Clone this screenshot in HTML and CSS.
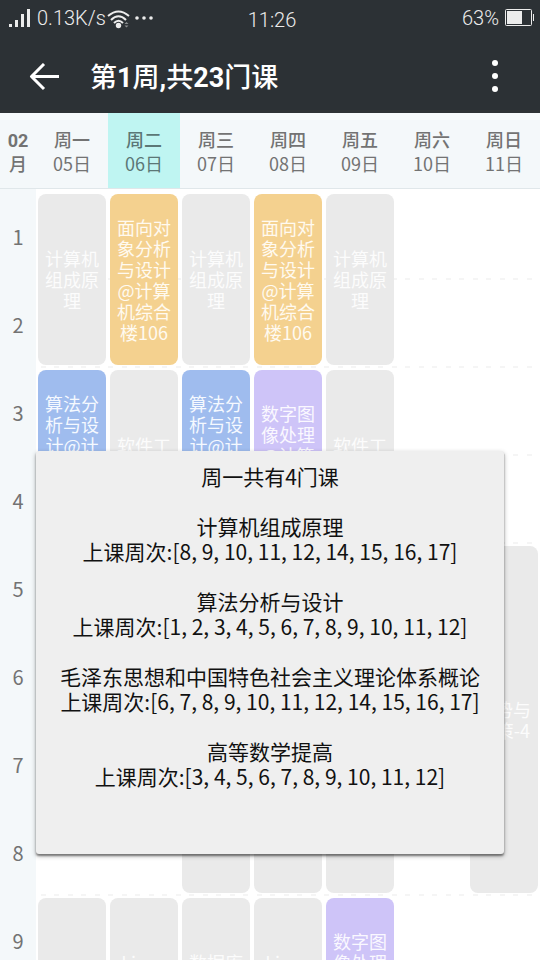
FILE: index.html
```html
<!DOCTYPE html>
<html lang="zh-CN">
<head>
<meta charset="utf-8">
<meta name="viewport" content="width=device-width, initial-scale=1">
<title>课程表</title>
<link rel="stylesheet" href="styles.css">
</head>
<body>
<div class="status">
  <div class="status-left">
    <svg width="22" height="20" viewBox="0 0 22 20" fill="#ececec"><rect x="0" y="16" width="3" height="3"/><rect x="6" y="12" width="3" height="7"/><rect x="12" y="6" width="3" height="13"/><rect x="18" y="1" width="3" height="18"/></svg>
    <span class="speed">0.13K/s</span>
    <svg class="wifi" width="24" height="20" viewBox="0 0 24 20" fill="none" stroke="#ececec" stroke-width="2"><path d="M1 7Q11.500-2 22 7M4 11Q11.500 3.500 19 11M7 14Q11.500 9.500 16 14"/><circle cx="11.500" cy="16.500" r="2.700" fill="#ececec" stroke="none"/><path d="M17.500 15h4l-2-2zM17.500 16.500h4l-2 2z" fill="#8b8e90" stroke="none"/></svg>
    <svg class="dots" width="20" height="20" viewBox="0 0 20 20" fill="#ececec"><circle cx="4" cy="10" r="1.800"/><circle cx="11" cy="10" r="1.800"/><circle cx="18" cy="10" r="1.800"/></svg>
  </div>
  <time class="clock">11:26</time>
  <div class="status-right">
    <span class="percent">63%</span>
    <svg width="30" height="18" viewBox="0 0 30 18"><rect x="0.500" y="0.500" width="26" height="16" rx="1" fill="none" stroke="#ececec"/><rect x="2" y="2" width="15" height="13" fill="#ececec"/><path d="M28.500 5v7" stroke="#ececec"/></svg>
  </div>
</div>
<header class="bar">
  <button class="icon-button" type="button" aria-label="返回"><svg width="32" height="28" viewBox="0 0 32 28" fill="none" stroke="#fff" stroke-width="3" stroke-linejoin="round"><path d="M15 1L2.500 13.500 15 26M3 13.500h27"/></svg></button>
  <h1>第<b>1</b>周<b>,</b>共<b>23</b>门课</h1>
  <button class="icon-button" type="button" aria-label="更多"><svg width="8" height="34" viewBox="0 0 8 34" fill="#fff"><circle cx="4" cy="3" r="3"/><circle cx="4" cy="16" r="3"/><circle cx="4" cy="29" r="3"/></svg></button>
</header>
<div class="days">
  <div class="month"><b>02</b><span>月</span></div>
  <div class="day"><strong>周一</strong><span>05日</span></div>
  <div class="day today"><strong>周二</strong><span>06日</span></div>
  <div class="day"><strong>周三</strong><span>07日</span></div>
  <div class="day"><strong>周四</strong><span>08日</span></div>
  <div class="day"><strong>周五</strong><span>09日</span></div>
  <div class="day"><strong>周六</strong><span>10日</span></div>
  <div class="day"><strong>周日</strong><span>11日</span></div>
</div>
<main class="schedule">
  <div class="period r1">1</div><div class="period r2">2</div><div class="period r3">3</div><div class="period r4">4</div><div class="period r5">5</div><div class="period r6">6</div><div class="period r7">7</div><div class="period r8">8</div><div class="period r9">9</div>
  <div class="rule r1"></div><div class="rule r2"></div><div class="rule r3"></div><div class="rule r4"></div><div class="rule r5"></div><div class="rule r6"></div><div class="rule r7"></div><div class="rule r8"></div>

  <div class="course mon p1">计算机<br>组成原<br>理</div>
  <div class="course tue p1 amber">面向对<br>象分析<br>与设计<br>@计算<br>机综合<br>楼106</div>
  <div class="course wed p1">计算机<br>组成原<br>理</div>
  <div class="course thu p1 amber">面向对<br>象分析<br>与设计<br>@计算<br>机综合<br>楼106</div>
  <div class="course fri p1">计算机<br>组成原<br>理</div>

  <div class="course mon p3 blue">算法分<br>析与设<br>计@计<br>算机综<br>合楼<br>106</div>
  <div class="course tue p3">软件工<br>程</div>
  <div class="course wed p3 blue">算法分<br>析与设<br>计@计<br>算机综<br>合楼<br>106</div>
  <div class="course thu p3 violet">数字图<br>像处理<br>@计算<br>机综合<br>楼106</div>
  <div class="course fri p3">软件工<br>程</div>

  <div class="course wed p7"></div>
  <div class="course thu p7"></div>
  <div class="course fri p7"></div>
  <div class="course sun p5">形势与<br>政策-4</div>

  <div class="course mon p9"></div>
  <div class="course tue p9">Linux<br>操作系<br>统</div>
  <div class="course wed p9">数据库<br>系统原<br>理</div>
  <div class="course thu p9">Linux<br>操作系<br>统</div>
  <div class="course fri p9 violet">数字图<br>像处理<br>@计算<br>机综合<br>楼106</div>
</main>
<section class="toast" role="status">
  <p>周一共有4门课</p>
  <p>计算机组成原理<br>上课周次:[8, 9, 10, 11, 12, 14, 15, 16, 17]</p>
  <p>算法分析与设计<br>上课周次:[1, 2, 3, 4, 5, 6, 7, 8, 9, 10, 11, 12]</p>
  <p>毛泽东思想和中国特色社会主义理论体系概论<br>上课周次:[6, 7, 8, 9, 10, 11, 12, 14, 15, 16, 17]</p>
  <p>高等数学提高<br>上课周次:[3, 4, 5, 6, 7, 8, 9, 10, 11, 12]</p>
</section>
</body>
</html>
```
FILE: styles.css
```css
* { box-sizing: border-box; }

body {
  display: flex;
  flex-direction: column;
  margin: 0;
  height: 100vh;
  overflow: hidden;
  position: relative;
  background: #fff;
  color: #737373;
  font-family: "Noto Sans CJK SC", sans-serif;
}

.status {
  display: grid;
  flex: none;
  grid-template-columns: 1fr auto 1fr;
  align-items: center;
  height: 40px;
  padding: 0 5px 4px 9px;
  background: #2c3135;
  color: #ececec;
  font-family: Roboto, sans-serif;
  font-size: 20px;
  font-weight: 300;
  line-height: 24px;
}
.status-left, .status-right { display: flex; align-items: center; }
.status-left { gap: 6px; }
.status-left .wifi { margin: 2px -4px 0 -5px; }
.status-right { justify-content: flex-end; gap: 6px; }
.clock { padding-top: 4px; }

.bar {
  display: flex;
  flex: none;
  align-items: center;
  height: 73px;
  padding: 0 21px;
  background: #2c3135;
  color: #fff;
}
.bar h1 {
  flex: 1;
  margin: 0 0 0 21px;
  font-size: 27px;
  font-weight: 500;
  line-height: 40px;
}
.bar b, .month b { font-family: Roboto, sans-serif; font-weight: 700; }
.icon-button {
  display: flex;
  align-items: center;
  justify-content: center;
  width: 48px;
  height: 48px;
  padding: 0;
  border: 0;
  background: none;
}

.days, .schedule {
  display: grid;
  grid-template-columns: 36px repeat(7, 1fr);
}
.days {
  flex: none;
  height: 76px;
  border-bottom: 1px solid #e0e7ea;
  background: #f4f8fa;
  font-size: 18px;
  line-height: 24px;
  text-align: center;
}
.month, .day { display: flex; flex-direction: column; }
.month { padding-top: 17px; font-weight: 500; line-height: 22px; }
.day { padding-top: 14px; }
.day strong { font-weight: 500; }
.today { background: #bff5f2; color: #5b7776; }

.schedule {
  flex: 1;
  min-height: 0;
  overflow: hidden;
  grid-template-rows: repeat(10, 88px);
  padding-top: 2px;
  background: linear-gradient(to right, #f4f8fa 36px, #fff 36px);
}
.period {
  grid-column: 1;
  padding-top: 2px;
  font-size: 20px;
  line-height: 88px;
  text-align: center;
}
.rule {
  grid-column: 2 / -1;
  align-self: end;
  height: 2px;
  margin: 0 1px -1px 5px;
  background:
    repeating-linear-gradient(to right, #f5f5f5 0 5px, transparent 5px 27px),
    repeating-linear-gradient(to right, transparent 0 13px, #f5f5f5 13px 18px, transparent 18px 27px);
}
.r1 { grid-row: 1; } .r2 { grid-row: 2; } .r3 { grid-row: 3; } .r4 { grid-row: 4; } .r5 { grid-row: 5; }
.r6 { grid-row: 6; } .r7 { grid-row: 7; } .r8 { grid-row: 8; } .r9 { grid-row: 9; }

.course {
  display: flex;
  align-items: center;
  justify-content: center;
  margin: 3px 2px 2px;
  border-radius: 8px;
  background: #eaeaea;
  color: #fcfcfc;
  font-size: 18px;
  line-height: 21px;
  text-align: center;
}
.amber { background: #f4d18f; color: #fffaf0; }
.blue { background: #9fbcee; color: #f5f9ff; }
.violet { background: #cec4f8; color: #faf8ff; }
.mon { grid-column: 2; } .tue { grid-column: 3; } .wed { grid-column: 4; } .thu { grid-column: 5; }
.fri { grid-column: 6; } .sun { grid-column: 8; }
.p1 { grid-row: 1 / span 2; } .p3 { grid-row: 3 / span 2; } .p5 { grid-row: 5 / span 4; }
.p7 { grid-row: 7 / span 2; } .p9 { grid-row: 9 / span 2; }

.toast {
  position: absolute;
  left: 36px;
  right: 36px;
  bottom: 106px;
  padding: 13px 12px 65px;
  border-radius: 3px;
  background: #efefef;
  box-shadow: 0 2px 2px rgba(0, 0, 0, .4), 0 2px 5px rgba(0, 0, 0, .3);
  color: #111;
  font-size: 21px;
  line-height: 25px;
  text-align: center;
}
.toast p { margin: 0 0 25px; }
.toast p:last-child { margin: 0; }
```
